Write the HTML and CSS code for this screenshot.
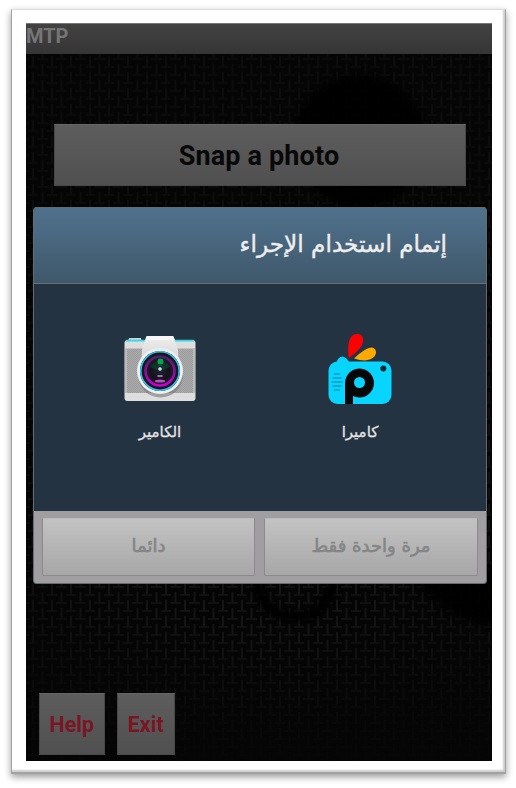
FILE: index.html
```html
<!DOCTYPE html>
<html lang="en">
<head>
<meta charset="utf-8">
<title>MTP</title>
<link rel="stylesheet" href="styles.css">
</head>
<body>
<div class="frame">
<main class="screen">
  <svg class="weave" width="466" height="738" aria-hidden="true">
    <defs>
      <pattern id="basket" width="19" height="16" patternUnits="userSpaceOnUse">
        <path d="M7 1v10M16.500 9v7M16.500 0v3" stroke="#161616" stroke-width="2"/>
        <path d="M11 4h8M0 4h3M2 12h10" stroke="#161616" stroke-width="1.500"/>
      </pattern>
      <radialGradient id="light" gradientUnits="userSpaceOnUse" cx="233" cy="480" r="430">
        <stop offset="0" stop-color="#050505" stop-opacity="0"/>
        <stop offset=".3" stop-color="#050505" stop-opacity=".05"/>
        <stop offset=".65" stop-color="#050505" stop-opacity=".5"/>
        <stop offset="1" stop-color="#050505" stop-opacity=".55"/>
      </radialGradient>
      <linearGradient id="fade" x1="0" y1="0" x2="0" y2="1">
        <stop offset=".82" stop-color="#050505" stop-opacity="0"/>
        <stop offset="1" stop-color="#050505" stop-opacity=".85"/>
      </linearGradient>
      <filter id="soft"><feGaussianBlur stdDeviation="3"/></filter>
    </defs>
    <rect width="466" height="738" fill="#050505"/>
    <rect width="466" height="738" fill="url(#basket)"/>
    <rect width="466" height="738" fill="url(#light)"/>
    <rect width="466" height="738" fill="url(#fade)"/>
    <g filter="url(#soft)" fill="#050505">
      <circle cx="334" cy="118" r="66" opacity=".85"/>
      <path d="M382 545Q420 606 480 602V545Z" opacity=".85"/>
      <path d="M230 552Q234 594 269 594T308 552" fill="none" stroke="#050505" stroke-width="9"/>
    </g>
  </svg>
  <div class="content">
    <header class="titlebar">MTP</header>
    <button class="btn snap">Snap a photo</button>
    <section class="dialog" dir="rtl" lang="ar">
      <h1 class="dialog-title">إتمام استخدام الإجراء</h1>
      <div class="apps">
        <div class="app">
          <svg class="icon" width="72" height="76" viewBox="0 0 72 76">
            <path d="M12 25Q12 22 14 19Q18 14 23 19L26 24Z" fill="#08d5ff"/>
            <rect x="4.5" y="21.5" width="63" height="42.500" rx="9" fill="#08d5ff"/>
            <path d="M25 18C23 5 25-6 33-6C40-6 41 2 36 8Q32 13 25 18Z" fill="#f00"/>
            <path d="M30 18.500Q42 7 48 7.500C54 9 53 16 47 19Q41 22 30 18.500Z" fill="#ffa800"/>
            <path d="M21 64V43A14.500 14.500 0 1 1 29 56V64Z" fill="#050708"/>
            <circle cx="35.500" cy="42.500" r="5.500" fill="#08d5ff"/>
            <circle cx="59.300" cy="28.500" r="3" fill="#07272f"/>
            <path d="M10 34h6M8.500 38h9M7.500 42h11M8.500 46h9M10 50h6" stroke="#079dbb" stroke-width="1.600"/>
          </svg>
          <span class="label">كاميرا</span>
        </div>
        <div class="app">
          <svg class="icon" width="72" height="76" viewBox="0 0 72 76">
            <defs>
              <linearGradient id="silver" x1="0" y1="0" x2="0" y2="1"><stop stop-color="#eee"/><stop offset=".5" stop-color="#ddd"/><stop offset="1" stop-color="#bbb"/></linearGradient>
              <radialGradient id="lens"><stop stop-color="#20242c"/><stop offset=".65" stop-color="#15101d"/><stop offset="1" stop-color="#282037"/></radialGradient>
              <linearGradient id="violet" x1="0" y1="0" x2="0" y2="1"><stop stop-color="#4b2068"/><stop offset="1" stop-color="#c800d2"/></linearGradient>
              <pattern id="grain" width="2" height="2" patternUnits="userSpaceOnUse"><rect width="2" height="2" fill="#aaa"/><path d="M0 0h1v1H0zM1 1h1v1H1z" fill="#9d9d9f"/></pattern>
            </defs>
            <path d="M4.500 4V-1Q5-2 7-2H17L18 4Z" fill="#ddd"/>
            <path d="M5-1h12" stroke="#9ed8df" stroke-width="1"/>
            <rect x=".5" y="0" width="71" height="61" rx="3" fill="#dedede"/>
            <path d="M2 .6H70" stroke="#38d4e7" stroke-width="1.600"/>
            <rect x="1" y="8.500" width="70" height="44.500" fill="url(#grain)"/>
            <path d="M2 9v44M70 9v44" stroke="#b9b9b9" stroke-width="2"/>
            <path d="M17 32L18 10L22-3Q22-4 25-4H48Q50-4 50-2L54 10L55 32Z" fill="url(#silver)"/>
            <path d="M22 0V-3Q22-4 25-4H48Q50-4 50-2L51 0Z" fill="#f6f6f6"/>
            <circle cx="36.500" cy="35" r="22.500" fill="#777" opacity=".6"/>
            <circle cx="36" cy="31" r="23" fill="#eee"/>
            <circle cx="36" cy="31" r="20" fill="#15191d"/>
            <circle cx="36" cy="31" r="19.200" fill="none" stroke="#39bde7" stroke-width="1.600"/>
            <circle cx="36" cy="31" r="14.500" fill="url(#lens)" stroke="url(#violet)" stroke-width="2.500"/>
            <path d="M26 27A11 10 0 0 1 46 27L36 31Z" fill="#075431" opacity=".5"/>
            <circle cx="36.500" cy="21.500" r="3" fill="#05a354"/>
            <circle cx="36" cy="29" r="1.800" fill="#c2e5f8"/>
            <path d="M33.500 36h5" stroke="#a77db7" stroke-width="1.800"/>
            <ellipse cx="36" cy="41" rx="5" ry="1.500" fill="#b34fc2"/>
          </svg>
          <span class="label">الكامير</span>
        </div>
      </div>
      <footer class="actions">
        <button class="choice" disabled>مرة واحدة فقط</button>
        <button class="choice" disabled>دائما</button>
      </footer>
    </section>
    <nav class="bottom">
      <button class="btn help">Help</button>
      <button class="btn exit">Exit</button>
    </nav>
  </div>
</main>
</div>
</body>
</html>
```
FILE: styles.css
```css
* { box-sizing: border-box; }
body { margin: 0; padding: 9px 10px 14px 11px; background: #fff; font-family: Roboto, sans-serif; }
button { margin: 0; padding: 0; font-family: inherit; }
.frame { width: 495px; height: 765px; padding: 13px 13px 11px 14px; background: #fff; border: solid #a2a2a2; border-width: 1px 1px 2px; border-top-color: #ddd; box-shadow: 0 3px 7px rgba(0,0,0,.4), inset -2px -2px 2px #ccc; }
.screen { display: grid; width: 466px; height: 738px; overflow: hidden; }
.weave, .content { grid-area: 1 / 1; }
.weave { display: block; }
.content { display: flex; flex-direction: column; z-index: 1; min-width: 0; }
.titlebar { height: 31px; background: linear-gradient(#424242, #353535); border-top: 1px solid #777; color: #767676; font-size: 20px; font-weight: 700; line-height: 25px; }
.btn { border: 1px solid #484848; border-top-color: #666; background: linear-gradient(#5d5d5d, #505050); font-weight: 700; }
.snap { width: 412px; height: 62px; margin: 70px 0 0 28px; color: #080808; font-size: 27px; letter-spacing: .15px; padding: 2px 2px 0 0; }
.dialog { width: 454px; height: 377px; margin: 21px 0 0 7px; border: 1px solid #656b6e; border-radius: 3px; overflow: hidden; background: #243342; font-family: "DejaVu Sans", sans-serif; }
.dialog-title { height: 76px; margin: 0; padding: 0 39px 0 0; border-bottom: 1px solid #657078; background: linear-gradient(#50718d, #3f586a); color: #eee; font-size: 23.2px; font-weight: 400; line-height: 72px; white-space: nowrap; -webkit-text-stroke: .4px; }
.apps { height: 227px; padding: 56px 26px 0; display: grid; grid-template-columns: 1fr 1fr; }
.app { display: flex; flex-direction: column; align-items: center; }
.icon { overflow: visible; }
.label { margin-top: 5px; color: #e4e4e4; font-size: 15px; line-height: 22px; -webkit-text-stroke: .3px; }
.actions { height: 72px; padding: 7px 8px 8px 7px; display: grid; grid-template-columns: 214px 213px; gap: 9px; background: #a19ea1; }
.choice { height: 58px; padding-bottom: 3px; border: 1px solid #8c8a8c; border-top-color: #bbb; border-radius: 2px; background: linear-gradient(#c3c3c3, #a7a7a7); color: #858585; font-size: 18px; font-weight: 400; -webkit-text-stroke: .6px; }
.bottom { display: flex; gap: 12px; margin: 109px 0 0 13px; }
.bottom .btn { height: 62px; color: #7c1421; font-size: 21.5px; padding: 1px 1px 0 0; }
.help { width: 66px; }
.exit { width: 58px; }
```
